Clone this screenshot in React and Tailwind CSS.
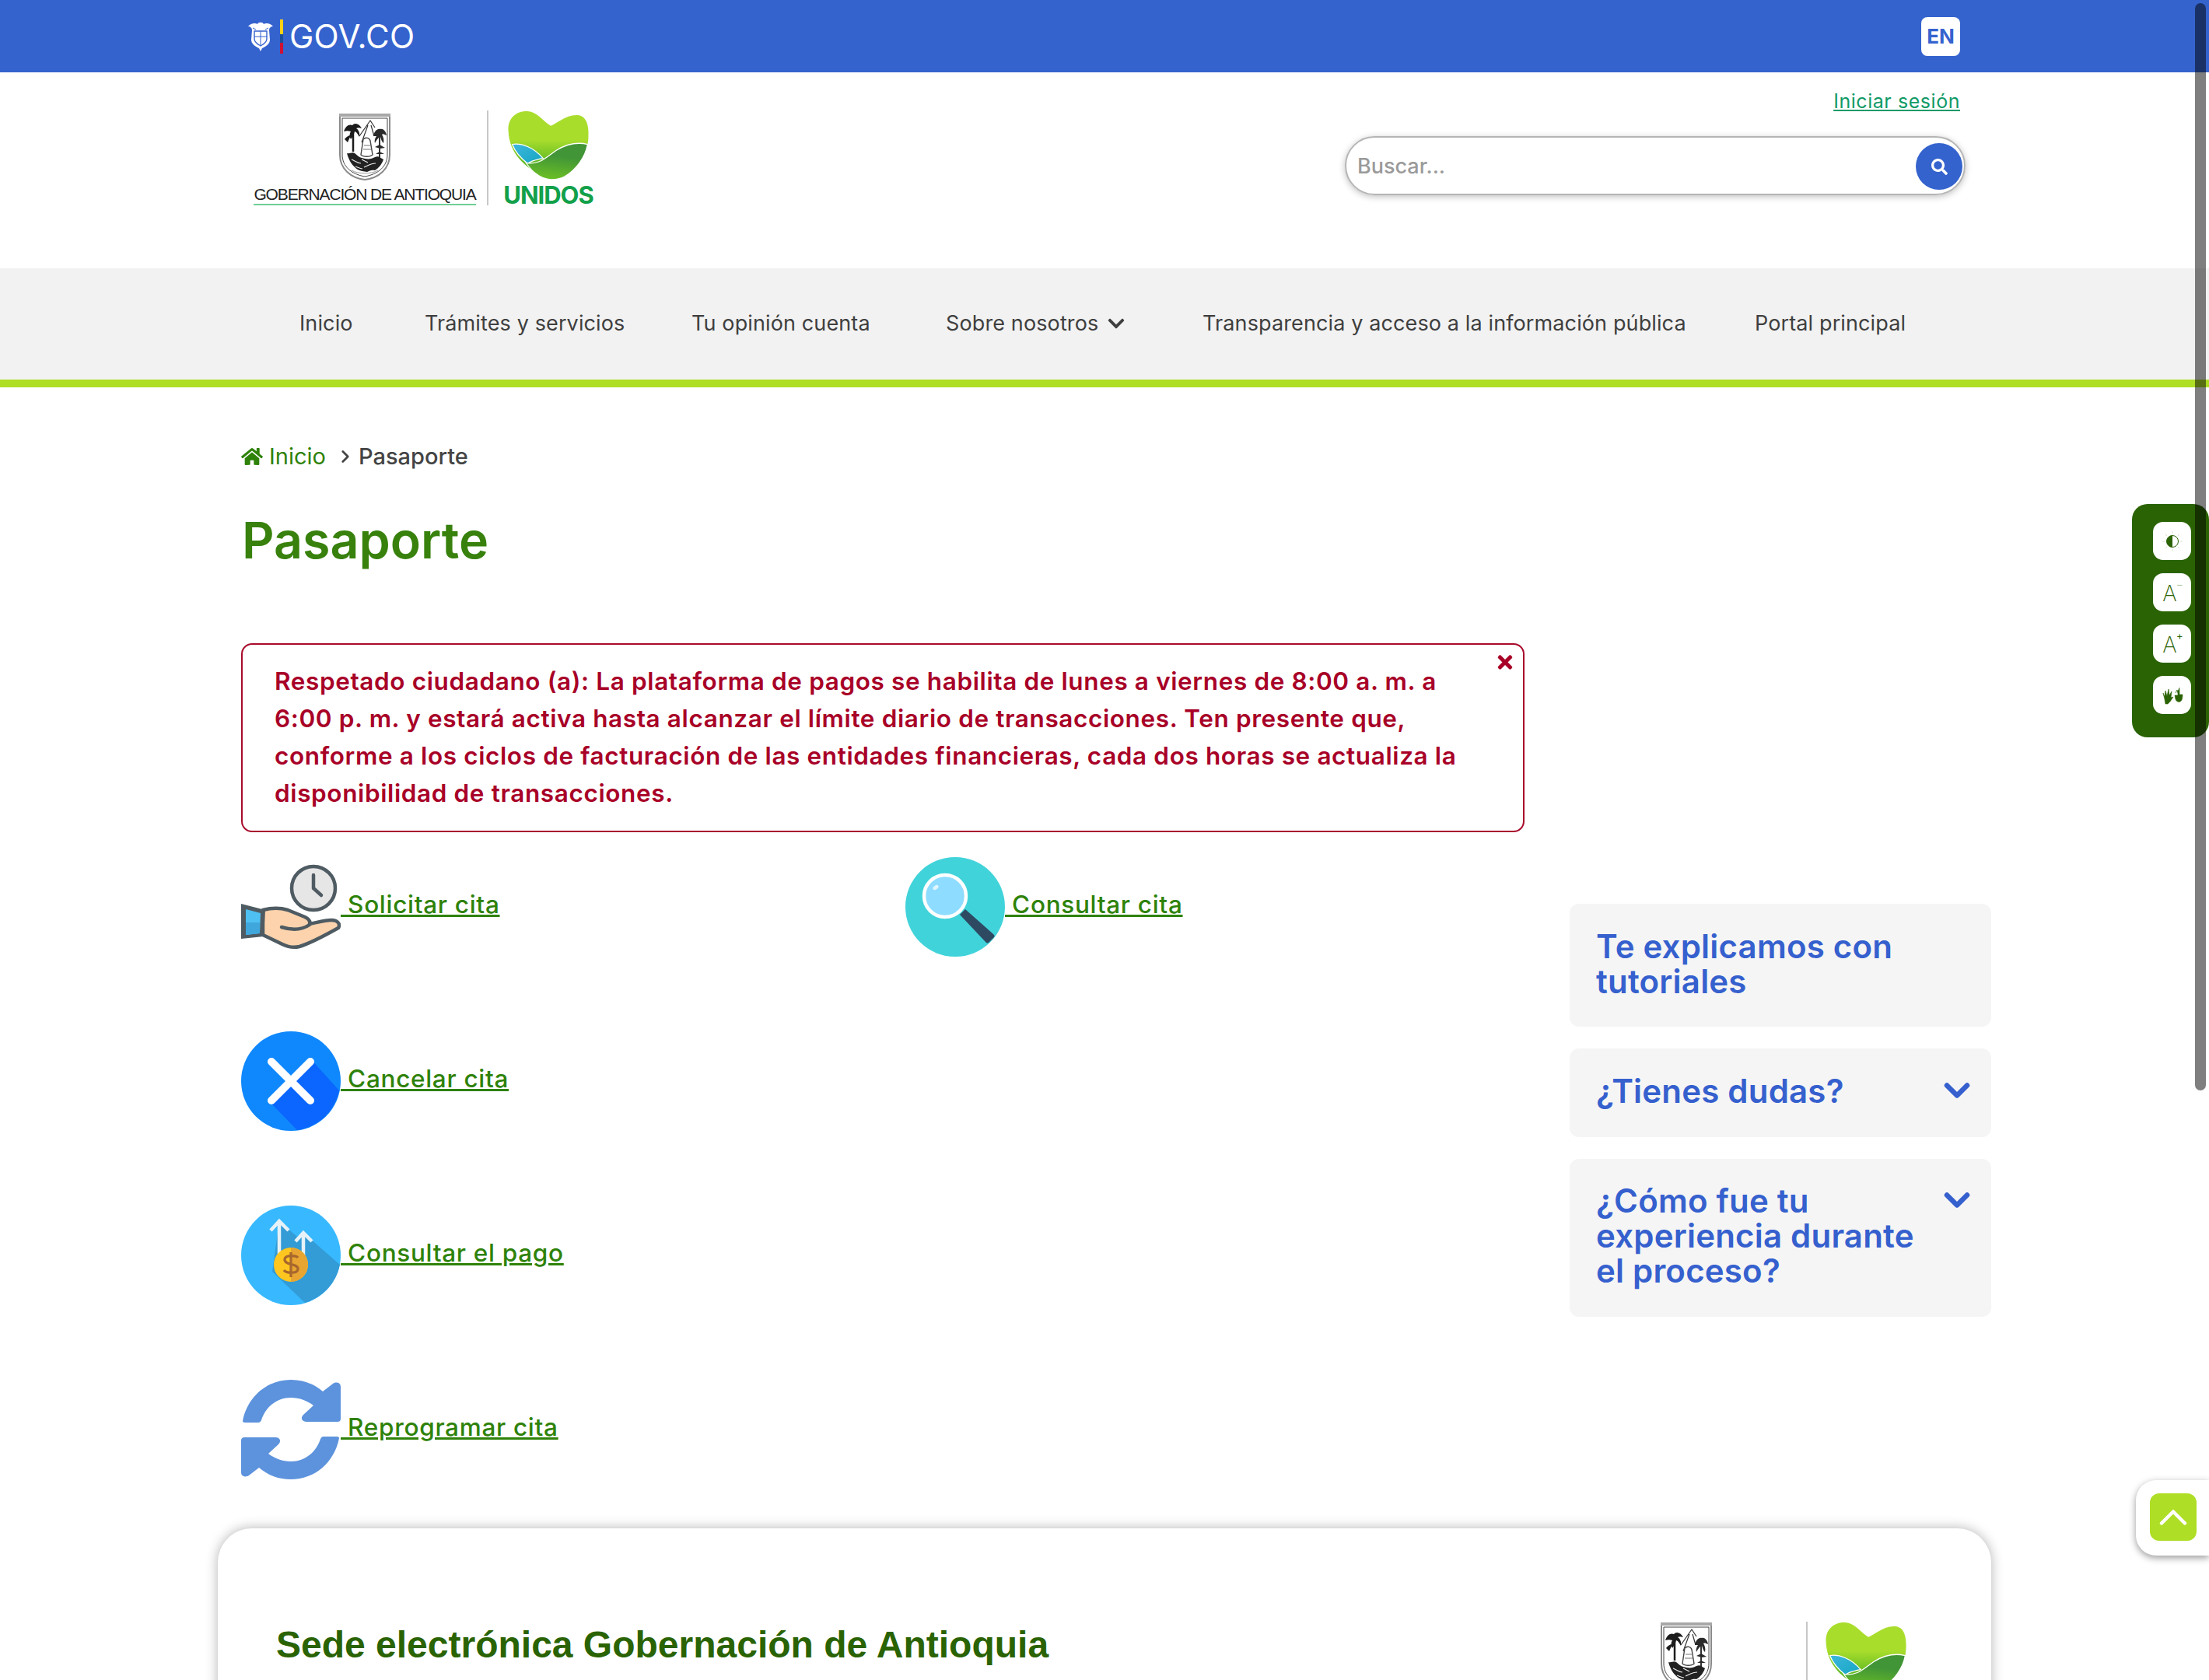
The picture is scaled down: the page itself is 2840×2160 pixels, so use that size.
import { ChevronDown, ChevronRight, ChevronUp } from 'lucide-react';
import { FaHome, FaTimes, FaChevronDown, FaSearch } from 'react-icons/fa';

const links = [
  { label: 'Solicitar cita', Icon: HandClockIcon },
  { label: 'Consultar cita', Icon: MagnifierIcon },
  { label: 'Cancelar cita', Icon: CancelIcon },
  null,
  { label: 'Consultar el pago', Icon: PaymentIcon },
  null,
  { label: 'Reprogramar cita', Icon: SyncIcon },
];

const navItems = [
  ['Inicio', 'w-[161px]'],
  ['Trámites y servicios', 'w-[343px]'],
  ['Tu opinión cuenta', 'w-[327px]'],
  ['Sobre nosotros', 'w-[330px]'],
  ['Transparencia y acceso a la información pública', 'w-[710px]'],
  ['Portal principal', 'w-[240px]'],
];

function Shield({ className }) {
  return (
    <svg viewBox="0 0 68 88" className={className}>
      <path d="M2 3h64v51c0 18-14 30-32 32C16 84 2 72 2 54z" fill="#fff" stroke="#8a8a8a" strokeWidth="2" />
      <path d="M1 1h66v4H1z" fill="#a8a8a8" />
      <path d="M5 7h58v47c0 15-12 25-29 28C17 79 5 69 5 54z" fill="none" stroke="#444" strokeWidth="1" />
      {/* palm */}
      <path d="M19 50V24" stroke="#1c1c1c" strokeWidth="2.5" />
      <path d="M7 24c2-7 7-10 11-8 3-4 9-2 12 4-3-1-5-1-7 0 3 2 5 6 4 11-2-3-3-6-6-7-1 3-2 7-5 10-2-3-2-7 0-10-3-1-6-1-9 0zM8 34c2-3 5-5 8-5l-4 9z" fill="#1c1c1c" />
      {/* mountain */}
      <path d="M27 30 41 10l6 9M38 16l-8 22M42 16l4 14" fill="none" stroke="#333" strokeWidth="1.2" />
      {/* tree */}
      <path d="M53 62V24" stroke="#333" strokeWidth="2" />
      <path d="M45 30c1-6 5-10 9-9 3-1 7 2 8 8-3-1-4-2-6-1 2 3 3 7 2 11-3-3-3-6-4-8-3 1-5 4-7 8-1-3 0-6 2-9zM47 44l6-3 7 4-6 1zM48 53l5-3 6 3z" fill="#2a2a2a" />
      {/* figure */}
      <path d="M32 34c3-3 8-2 9 2l3 18c-3 3-12 3-15 0z" fill="#fff" stroke="#444" strokeWidth="1.4" />
      <path d="M33 42h8M32 47h10" stroke="#777" strokeWidth="1" />
      {/* foliage */}
      <path d="M11 52c4 1 7-2 10 0s5 5 9 6 8 2 12 1 8-4 11-2 4 2 5 3c-2 6-6 11-11 14-5-1-7 1-10 2-5-1-8-1-12-3-6-4-11-10-14-21z" fill="#222" />
      <path d="M17 60c5 2 8 5 12 5M33 70c5-2 9-5 15-5M22 69c3 1 6 3 9 3M30 60l8 4" stroke="#eee" strokeWidth="1.2" fill="none" />
      <path d="M17 74c8 5 26 5 34 0" stroke="#999" strokeWidth="1" fill="none" />
    </svg>
  );
}

function Heart({ className }) {
  return (
    <svg viewBox="0 0 106 92" className={className}>
      <defs>
        <linearGradient id="heartTop" x1="0" y1="0" x2="0" y2="1">
          <stop offset="0.42" stopColor="#a9dd2c" />
          <stop offset="0.75" stopColor="#62bb23" />
        </linearGradient>
        <linearGradient id="heartBottom" x1="0.6" y1="0" x2="0.4" y2="1">
          <stop offset="0.35" stopColor="#419537" />
          <stop offset="1" stopColor="#6cc024" />
        </linearGradient>
        <linearGradient id="heartWater" x1="0" y1="0" x2="1" y2="1">
          <stop offset="0" stopColor="#3cb7dd" />
          <stop offset="1" stopColor="#16a5c2" />
        </linearGradient>
      </defs>
      <path d="M1 26C0 8 14 0 26 1c13 1 20 13 30 19 8-3 20-15 35-14 12 1 15 14 14 30-1 20-15 40-31 49-12 6-24 5-33-2C22 72 2 56 1 26z" fill="url(#heartTop)" />
      <path d="M6 44c12-2 28 4 40 18-8 2-15 3-20 7C17 62 10 54 6 44z" fill="url(#heartWater)" stroke="#fff" strokeWidth="1.3" />
      <path d="M24 68c17 3 25-6 39-16 13-8 28-11 41-8-3 17-15 33-30 42-12 6-26 5-36-3-6-4-10-9-14-15z" fill="url(#heartBottom)" stroke="#fff" strokeWidth="1.3" />
    </svg>
  );
}

function HandClockIcon() {
  return (
    <svg viewBox="0 0 128 128" className="w-[128px] h-[128px] shrink-0">
      <circle cx="93" cy="40" r="28" fill="#e6e6e6" stroke="#4f5b62" strokeWidth="4.5" />
      <path d="M93 23v17l10 9" fill="none" stroke="#4f5b62" strokeWidth="4.5" strokeLinecap="round" strokeLinejoin="round" />
      <path d="M28 68c12-3 22-3 32 0l22 9c6 3 7 6 6 9 10-2 20-5 28-5 8 0 12 5 9 10-16 9-34 19-50 24-8 2-14 1-22-3l-25-12z" fill="#fdd3ad" stroke="#4f5b62" strokeWidth="4.5" strokeLinejoin="round" />
      <path d="M52 90c10 3 24 5 36-3" fill="none" stroke="#4f5b62" strokeWidth="4.5" strokeLinecap="round" />
      <path d="M0 60l31 8-2 34-29 3z" fill="#4f5b62" />
      <path d="M6 67l19 5-1 26-18 2z" fill="#4fc0f2" />
      <path d="M6 84h18l0 14-18 2z" fill="#3fa7db" />
    </svg>
  );
}

function MagnifierIcon() {
  return (
    <svg viewBox="0 0 128 128" className="w-[128px] h-[128px] shrink-0">
      <circle cx="64" cy="64" r="64" fill="#41d3da" />
      <path d="M70 74l7-7 36 32c2 2 2 3 0 5l-5 5c-2 2-3 2-5 0z" fill="#2e4a63" />
      <circle cx="51" cy="50" r="27" fill="#8edcff" stroke="#fff" strokeWidth="4.5" />
      <ellipse cx="39" cy="39" rx="4" ry="2.5" transform="rotate(-35 39 39)" fill="#dff6ff" />
    </svg>
  );
}

function CancelIcon() {
  return (
    <svg viewBox="0 0 128 128" className="w-[128px] h-[128px] shrink-0">
      <circle cx="64" cy="64" r="64" fill="#1088fd" />
      <path d="M90 36l36 40A64 64 0 0 1 72 127L38 92z" fill="#0a66ff" />
      <path d="M39 39l50 50M89 39 39 89" stroke="#fff" strokeWidth="10" strokeLinecap="round" />
    </svg>
  );
}

function PaymentIcon() {
  return (
    <svg viewBox="0 0 128 128" className="w-[128px] h-[128px] shrink-0">
      <circle cx="64" cy="64" r="64" fill="#38b9ff" />
      <path d="M49 20 72 40l8-5 47 41A64 64 0 0 1 82 125L40 85z" fill="#339bd6" />
      <path d="M49 66V20M38 32l11-12 12 12M80 66V36M70 46l10-11 11 11" fill="none" stroke="#e6f2f8" strokeWidth="4.5" />
      <circle cx="64" cy="76" r="22" fill="#ffc61f" />
      <path d="M64 54a22 22 0 0 1 0 44z" fill="#e8a531" />
      <path d="M73 67c-2-3-16-4-17 2-1 8 18 5 17 13-1 6-15 5-18 1M64 60v32" fill="none" stroke="#a8672c" strokeWidth="3.2" />
    </svg>
  );
}

function SyncIcon() {
  return (
    <svg viewBox="0 0 128 128" className="w-[128px] h-[128px] shrink-0" fill="#5d93dd">
      <path d="M2 53C8 22 33 0 64 0c16 0 29 5 41 15l13-10c5-3 10-1 10 4v41c0 3-2 4-4 4H84c-6 0-8-5-4-9l13-12c-8-6-18-10-29-10-19 0-33 13-38 29-1 2-2 3-4 3H5c-2 0-3-1-3-2z" />
      <path d="M126 75c-6 31-31 53-62 53-16 0-29-5-41-15l-13 10c-5 3-10 1-10-4V78c0-3 2-4 4-4h40c6 0 8 5 4 9L35 95c8 6 18 10 29 10 19 0 33-13 38-29 1-2 2-3 4-3h17c2 0 3 1 3 2z" />
    </svg>
  );
}

function TextSizeIcon({ sign }) {
  return (
    <span className="relative w-[49px] h-[49px] rounded-[13px] bg-white flex items-center justify-center">
      <span className="text-[#2a6304] text-[28px] leading-none font-['Inter',sans-serif] font-extralight mt-[3px] mr-[6px]">A</span>
      <span className={`absolute top-[8px] left-[30px] text-[13px] leading-none font-['Inter',sans-serif] ${sign === '+' ? 'text-[#2a6304]' : 'text-[#a8c59a]'}`}>{sign === '+' ? '+' : '−'}</span>
    </span>
  );
}

function AccessWidget() {
  return (
    <div className="absolute right-0 top-[648px] w-[99px] h-[300px] bg-[#2a6304] rounded-[20px] flex flex-col gap-[17px] pt-[23px] pl-[27px] overflow-hidden">
      <span className="w-[49px] h-[49px] rounded-[13px] bg-white flex items-center justify-center shrink-0">
        <svg viewBox="0 0 28 28" className="w-[28px] h-[28px]">
          <path d="M14 1v3M14 24v3M1 14h3M24 14h3M5 5l2 2M21 21l2 2M5 23l2-2M21 7l2-2" stroke="#d6e3cf" strokeWidth="1" />
          <circle cx="14" cy="14" r="7.5" fill="#fff" stroke="#2a6304" strokeWidth="1" />
          <path d="M14 6.5a7.5 7.5 0 0 0 0 15z" fill="#2a6304" />
        </svg>
      </span>
      <TextSizeIcon sign="-" />
      <TextSizeIcon sign="+" />
      <span className="w-[49px] h-[49px] rounded-[13px] bg-white flex items-center justify-center shrink-0">
        <svg viewBox="0 0 30 24" className="w-[30px] h-[24px]" fill="none" stroke="#2a6304">
          <path d="M3 9l2 5 1-8 2 7 2-9 1 8 3-5-1 8 3-1-4 6-3 3H6l-1-6z" fill="#2a6304" strokeWidth="0.6" />
          <path d="M24 2v9l4 0c0 5-1 8-3 9s-5 0-6-3l-1-5 4 0V6" fill="#2a6304" strokeWidth="0.6" />
          <path d="M19 9l2-4 1 4" strokeWidth="0.8" />
        </svg>
      </span>
    </div>
  );
}

function AlertBox() {
  return (
    <div className="relative h-[243px] border-2 border-[#a80b2c] rounded-[14px] pl-[41px] pr-[70px] pt-[23px] text-[#a80027] text-[31.5px] leading-[48px] font-semibold tracking-[0.62px] font-['Inter',sans-serif]">
      <p>
        Respetado ciudadano (a): La plataforma de pagos se habilita de lunes a viernes de 8:00 a. m. a
        6:00 p. m. y estará activa hasta alcanzar el límite diario de transacciones. Ten presente que,
        conforme a los ciclos de facturación de las entidades financieras, cada dos horas se actualiza la
        disponibilidad de transacciones.
      </p>
      <FaTimes className="absolute top-[9px] right-[11px] w-[24px] h-[27px]" />
    </div>
  );
}

function SideCard({ title, chevron, className }) {
  return (
    <div className={`bg-[#f5f5f5] rounded-[12px] pl-[34px] pr-[18px] flex justify-between items-start text-[#3560ce] text-[42px] leading-[45px] font-semibold tracking-[0.2px] font-['Inter',sans-serif] ${className}`}>
      <h3 className="w-[430px]">{title}</h3>
      {chevron && <ChevronDown className="w-[52px] h-[52px] mt-[-4px] shrink-0" strokeWidth={3} />}
    </div>
  );
}

export default function App() {
  return (
    <div className="relative w-[2840px] h-[2160px] overflow-hidden bg-white font-['Inter',sans-serif]">
      {/* Top bar */}
      <div className="h-[93px] bg-[#3563ce] pl-[318px] pr-[320px] flex items-center justify-between">
        <div className="flex items-center">
          <svg viewBox="0 0 34 40" className="w-[34px] h-[40px]">
            <path d="M1 7c3-4 9-5 12-3 1-3 7-3 8 0 3-2 9-1 12 3-3 0-5 2-5 5l1 12c0 6-6 9-10 11l-2 4-2-4C11 33 5 30 5 24l1-12c0-3-2-5-5-5z" fill="#fff" />
            <path d="M9 13h16v10c0 5-5 7-8 9-3-2-8-4-8-9z" fill="none" stroke="#3563ce" strokeWidth="1.4" />
            <path d="M9 20h16M17 13v18M7 9l4 2M27 9l-4 2" stroke="#3563ce" strokeWidth="1" />
          </svg>
          <div className="ml-[8px] w-[4px] h-[44px] flex flex-col">
            <span className="h-[19px] bg-[#fcd116]" />
            <span className="h-[11px] bg-[#1c4f9c]" />
            <span className="h-[14px] bg-[#ce1135]" />
          </div>
          <span className="ml-[8px] text-white text-[42px] leading-none font-normal tracking-[0.2px]">GOV.CO</span>
        </div>
        <span className="w-[50px] h-[50px] rounded-[8px] bg-white text-[#3563ce] text-[26px] font-bold flex items-center justify-center">EN</span>
      </div>

      {/* Header */}
      <div className="h-[252px] pl-[326px] pr-[313px] flex justify-between">
        <div className="flex items-start pt-[52px]">
          <div className="flex flex-col items-center w-[286px]">
            <Shield className="w-[68px] h-[88px]" />
            <span className="mt-[5px] text-[#222] text-[21px] leading-[24px] tracking-[-1.15px] whitespace-nowrap font-['Liberation_Sans',sans-serif]">GOBERNACIÓN DE ANTIOQUIA</span>
            <span className="w-[286px] h-[2px] bg-[#6fcf97]" />
          </div>
          <span className="ml-[14px] mt-[-3px] w-[2px] h-[122px] bg-[#c8c8c8]" />
          <div className="ml-[20px] mt-[-3px] flex flex-col items-center w-[114px]">
            <Heart className="w-[106px] h-[91px]" />
            <span className="mt-[3px] text-[#12a04a] text-[31px] leading-[30px] font-bold tracking-[-1px]">UNIDOS</span>
          </div>
        </div>
        <div className="w-[798px] flex flex-col items-end pt-[22px]">
          <a className="mr-[7px] text-[#129a67] text-[25px] leading-[30px] tracking-[0.55px] underline">Iniciar sesión</a>
          <div className="mt-[30px] w-full h-[76px] rounded-full border-2 border-[#b5b5b5] shadow-[0_2px_8px_rgba(0,0,0,0.25)] flex items-center justify-between pl-[14px] pr-[2px]">
            <span className="text-[#9a9a9a] text-[27px] font-medium mt-[2px]">Buscar...</span>
            <span className="w-[60px] h-[60px] rounded-full bg-[#3563ce] flex items-center justify-center mt-[2px]">
              <FaSearch className="w-[21px] h-[21px] text-white" />
            </span>
          </div>
        </div>
      </div>

      {/* Nav */}
      <nav className="h-[153px] bg-[#f2f2f2] border-b-[10px] border-[#aede25] pl-[385px] pt-[51px]">
        <ul className="flex text-[#3f3f3f] text-[27px] leading-[40px] tracking-[0.12px]">
          {navItems.map(([label, width]) => (
            <li key={label} className={`${width} flex items-center whitespace-nowrap`}>
              {label}
              {label === 'Sobre nosotros' && <FaChevronDown className="ml-[11px] w-[24px] h-[24px]" />}
            </li>
          ))}
        </ul>
      </nav>

      {/* Content */}
      <div className="pl-[310px] pr-[280px] flex">
        <main className="w-[1650px] shrink-0">
          <div className="pt-[70px] flex items-center text-[29px] leading-[38px]">
            <FaHome className="w-[28px] h-[26px] text-[#2e8209]" />
            <span className="ml-[8px] text-[#2e8209]">Inicio</span>
            <ChevronRight className="ml-[12px] w-[26px] h-[26px] text-[#444]" strokeWidth={2.5} />
            <span className="ml-[4px] text-[#444] font-medium">Pasaporte</span>
          </div>
          <h1 className="mt-[53px] ml-[1px] text-[#37810c] text-[64.5px] leading-[72px] font-semibold">Pasaporte</h1>
          <div className="mt-[96px]"><AlertBox /></div>

          <div className="mt-[32px] grid grid-cols-[854px_1fr] auto-rows-[224px]">
            {links.map((item, i) =>
              item ? (
                <a key={i} className="flex items-start text-[#2e8209] text-[31.5px] leading-[40px] font-medium tracking-[0.7px] underline">
                  <item.Icon />
                  <span className="mt-[41px] whitespace-pre">{' ' + item.label}</span>
                </a>
              ) : (
                <span key={i} />
              )
            )}
          </div>
        </main>

        <aside className="ml-[58px] w-[542px] pt-[664px] flex flex-col gap-[28px]">
          <SideCard title="Te explicamos con tutoriales" className="h-[158px] pt-[32px]" />
          <SideCard title="¿Tienes dudas?" chevron className="h-[114px] pt-[32px]" />
          <SideCard title="¿Cómo fue tu experiencia durante el proceso?" chevron className="h-[203px] pt-[31px]" />
        </aside>
      </div>

      {/* Footer card */}
      <div className="absolute left-[280px] top-[1965px] w-[2280px] h-[400px] rounded-[44px] bg-white shadow-[0_0_16px_rgba(0,0,0,0.3)] pl-[75px] pr-[108px] pt-[122px] flex justify-between items-start">
        <h2 className="text-[#2a6304] text-[48px] leading-[56px] font-bold font-['Liberation_Sans',sans-serif]">Sede electrónica Gobernación de Antioquia</h2>
        <div className="flex items-start mt-[-2px]">
          <Shield className="w-[68px] h-[88px]" />
          <span className="ml-[120px] w-[2px] h-[120px] bg-[#c8c8c8]" />
          <Heart className="ml-[22px] w-[106px] h-[91px]" />
        </div>
      </div>

      {/* Floating controls */}
      <AccessWidget />
      <div className="absolute right-0 top-[1903px] w-[94px] h-[97px] bg-white rounded-l-[26px] shadow-[0_3px_10px_rgba(0,0,0,0.4)] pl-[18px] pt-[17px]">
        <span className="flex w-[60px] h-[61px] rounded-[12px] bg-[#aede25] items-center justify-center">
          <ChevronUp className="w-[60px] h-[60px] text-white" strokeWidth={1.8} />
        </span>
      </div>

      {/* Overlay scrollbar */}
      <div className="absolute right-[4px] top-[4px] w-[14px] h-[1398px] rounded-full bg-black/50" />
    </div>
  );
}
